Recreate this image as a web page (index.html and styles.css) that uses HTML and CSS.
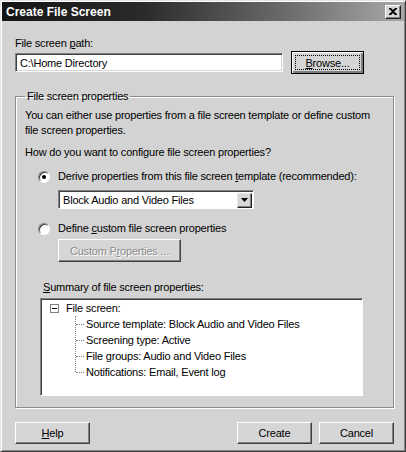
FILE: index.html
```html
<!DOCTYPE html>
<html lang="en">
<head>
  <meta charset="UTF-8">
  <title>Create File Screen</title>
  <link rel="stylesheet" href="styles.css">
</head>
<body>
  <div class="window">
    <div class="titlebar">
      <span class="title">Create File Screen</span>
      <span class="close-btn">
        <svg width="8" height="7" viewBox="0 0 8 7"><path d="M0 0h2l2 2 2-2h2v1L5 3.5 8 6v1H6L4 5 2 7H0V6l3-2.5L0 1z" fill="#000"/></svg>
      </span>
    </div>

    <div class="content">
      <div class="label path-label">File screen <u>p</u>ath:</div>
      <div class="path-row">
        <div class="textbox path-box">C:\Home Directory</div>
        <button class="btn btn-default"><span class="focus"><u>B</u>rowse...</span></button>
      </div>

      <fieldset class="group">
        <legend>File screen properties</legend>
        <p class="intro">You can either use properties from a file screen template or define custom<br>file screen properties.</p>
        <p class="question">How do you want to configure file screen properties?</p>

        <div class="option option-first">
          <span class="radio checked"></span>
          <span>Derive properties from this file screen <u>t</u>emplate (recommended):</span>
        </div>
        <div class="combo">
          <span class="combo-text">Block Audio and Video Files</span>
          <span class="combo-arrow">
            <svg width="7" height="4" viewBox="0 0 7 4"><path d="M0 0h7L3.5 4z" fill="#000"/></svg>
          </span>
        </div>

        <div class="option option-second">
          <span class="radio"></span>
          <span>Define <u>c</u>ustom file screen properties</span>
        </div>
        <button class="btn btn-disabled" disabled>Custom P<u>r</u>operties ...</button>

        <div class="label summary-label"><u>S</u>ummary of file screen properties:</div>
        <div class="tree">
          <div class="tree-root">
            <span class="expander"></span>
            <span>File screen:</span>
          </div>
          <ul class="tree-children">
            <li>Source template: Block Audio and Video Files</li>
            <li>Screening type: Active</li>
            <li>File groups: Audio and Video Files</li>
            <li>Notifications: Email, Event log</li>
          </ul>
        </div>
      </fieldset>

      <div class="footer">
        <button class="btn btn-footer"><u>H</u>elp</button>
        <div class="footer-right">
          <button class="btn btn-footer">Create</button>
          <button class="btn btn-footer">Cancel</button>
        </div>
      </div>
    </div>
  </div>
</body>
</html>
```

FILE: styles.css
```css
/* Classic dialog look */
body {
  margin: 0;
  background-color: #d3d3d3;
  font-family: "Liberation Sans", Arial, sans-serif;
  font-size: 11px;
  letter-spacing: -0.2px;
  color: #000;
}

.window {
  width: 406px;
  height: 452px;
  box-sizing: border-box;
  border: 1px solid;
  border-color: #e4e4e4 #3a3a3a #3a3a3a #e4e4e4;
  box-shadow: inset 1px 1px #ffffff, inset -1px -1px #8a8a8a;
  padding: 1px;
  background-color: #d3d3d3;
}

.titlebar {
  height: 19px;
  display: flex;
  align-items: center;
  justify-content: space-between;
  padding: 0 3px 0 4px;
  background: linear-gradient(to right, #151515 0%, #2a2a2a 35%, #6a6a6a 70%, #a8a8a8 100%);
  color: #fff;
}

.title {
  font-size: 12px;
  font-weight: bold;
  letter-spacing: 0;
}

.close-btn {
  width: 16px;
  height: 14px;
  box-sizing: border-box;
  display: flex;
  align-items: center;
  justify-content: center;
  background-color: #d6d6d6;
  border: 1px solid;
  border-color: #fff #222 #222 #fff;
  box-shadow: inset -1px -1px #808080;
}

.content {
  padding: 15px 10px 0 13px;
}

.label {
  line-height: 14px;
}

.path-row {
  display: flex;
  align-items: center;
  margin-top: 1px;
  height: 23px;
}

.textbox {
  background-color: #fff;
  box-sizing: border-box;
  border: 1px solid;
  border-color: #808080 #fff #fff #808080;
  box-shadow: inset 1px 1px #404040, inset -1px -1px #d4d4d4;
}

.path-box {
  width: 268px;
  height: 19px;
  padding: 2px 4px;
  line-height: 14px;
}

.btn {
  font-family: inherit;
  font-size: 11px;
  letter-spacing: -0.2px;
  color: #000;
  background-color: #d6d6d6;
  box-sizing: border-box;
  border: 1px solid;
  border-color: #fff #404040 #404040 #fff;
  box-shadow: inset -1px -1px #808080;
  padding: 0;
  display: flex;
  align-items: center;
  justify-content: center;
}

.btn-default {
  width: 73px;
  height: 23px;
  margin-left: 8px;
  border: 1px solid #000;
  box-shadow: inset 1px 1px #fff, inset -2px -2px #808080, inset -1px -1px #404040;
  padding: 3px;
}

.btn-default .focus {
  flex: 1;
  align-self: stretch;
  display: flex;
  align-items: center;
  justify-content: center;
  border: 1px dotted #000;
}

.group {
  margin: 15px 0 0 0;
  width: 379px;
  height: 319px;
  box-sizing: border-box;
  padding: 5px 8px 0 9px;
  border: 1px solid #8c8c8c;
  box-shadow: inset 1px 1px #fff, 1px 1px #fff;
}

.group legend {
  padding: 0 2px;
  margin-left: 0;
  line-height: 14px;
}

.group p {
  margin: 0;
  line-height: 15px;
}

.question {
  padding-top: 7px;
}

.option {
  display: flex;
  align-items: center;
  gap: 8px;
  line-height: 15px;
  padding-left: 13px;
}

.option-first {
  margin-top: 9px;
}

.option-second {
  margin-top: 12px;
}

.radio {
  width: 12px;
  height: 12px;
  box-sizing: border-box;
  border-radius: 50%;
  background-color: #fff;
  border: 1px solid;
  border-color: #808080 #fff #fff #808080;
  box-shadow: inset 1px 1px #404040;
  display: flex;
  align-items: center;
  justify-content: center;
}

.radio.checked::after {
  content: "";
  width: 4px;
  height: 4px;
  border-radius: 50%;
  background-color: #000;
}

.combo {
  margin: 6px 0 0 33px;
  width: 196px;
  height: 19px;
  display: flex;
  align-items: center;
  justify-content: space-between;
  background-color: #fff;
  box-sizing: border-box;
  border: 1px solid;
  border-color: #808080 #fff #fff #808080;
  box-shadow: inset 1px 1px #404040;
  padding: 2px 1px 1px 4px;
}

.combo-arrow {
  width: 15px;
  height: 15px;
  box-sizing: border-box;
  display: flex;
  align-items: center;
  justify-content: center;
  background-color: #d6d6d6;
  border: 1px solid;
  border-color: #e8e8e8 #222 #222 #e8e8e8;
  box-shadow: inset -1px -1px #808080;
}

.btn-disabled {
  margin: 3px 0 0 33px;
  width: 123px;
  height: 23px;
  color: #8c8c8c;
  text-shadow: 1px 1px #fff;
}

.summary-label {
  margin: 18px 0 0 18px;
}

.tree {
  margin: 4px 0 0 15px;
  width: 323px;
  height: 98px;
  box-sizing: border-box;
  background-color: #fff;
  border: 1px solid;
  border-color: #808080 #fff #fff #808080;
  box-shadow: inset 1px 1px #404040;
  padding: 1px 0 0 9px;
}

.tree-root {
  display: flex;
  align-items: center;
  gap: 7px;
  line-height: 16px;
}

.expander {
  width: 9px;
  height: 9px;
  box-sizing: border-box;
  border: 1px solid #808080;
  position: relative;
}

.expander::after {
  content: "";
  position: absolute;
  left: 1px;
  top: 3px;
  width: 5px;
  height: 1px;
  background-color: #000;
}

.tree-children {
  list-style: none;
  margin: 0 0 0 25px;
  padding: 0;
  border-left: 1px dotted #808080;
  height: 56px;
}

.tree-children li {
  line-height: 16px;
  display: flex;
  align-items: center;
}

.tree-children li::before {
  content: "";
  width: 8px;
  margin-right: 2px;
  border-top: 1px dotted #808080;
}

.footer {
  display: flex;
  justify-content: space-between;
  margin-top: 14px;
  width: 379px;
}

.footer-right {
  display: flex;
  gap: 7px;
}

.btn-footer {
  width: 75px;
  height: 22px;
}
```
